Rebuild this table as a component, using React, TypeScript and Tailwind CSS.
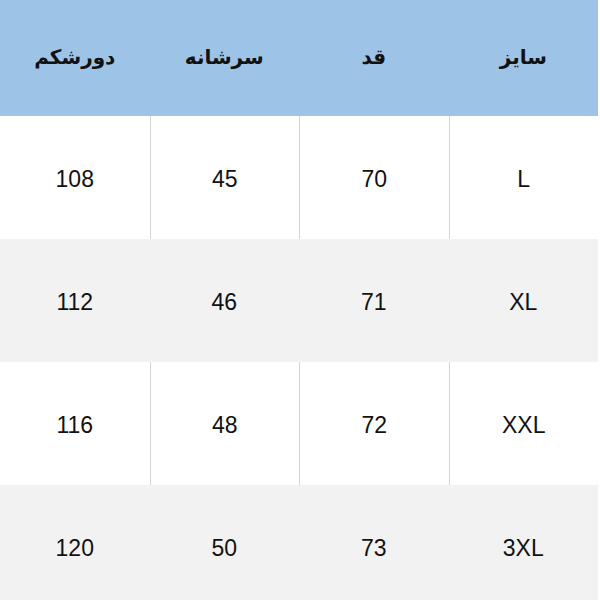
const headers = ["سایز", "قد", "سرشانه", "دورشکم"];

const rows = [
  ["L", "70", "45", "108"],
  ["XL", "71", "46", "112"],
  ["XXL", "72", "48", "116"],
  ["3XL", "73", "50", "120"],
];

const App = () => {
  return (
    <div className="w-[600px] h-[600px] bg-white overflow-hidden">
      <div dir="rtl" className="w-[598px]">
        <div className="grid grid-cols-4 h-[116px] bg-[#9dc3e6]">
          {headers.map((h) => (
            <div
              key={h}
              className="flex items-center justify-center pb-[2px] text-[20px] font-bold text-[#111] font-['DejaVu_Sans',sans-serif]"
            >
              {h}
            </div>
          ))}
        </div>
        {rows.map((row, i) => {
          const gray = i % 2 === 1;
          return (
            <div
              key={row[0]}
              className={
                gray
                  ? "grid grid-cols-4 h-[123px] bg-[#f2f2f2]"
                  : "grid grid-cols-4 h-[123px] bg-white"
              }
            >
              {row.map((cell, j) => (
                <div
                  key={j}
                  className={
                    !gray && j < 3
                      ? "flex items-center justify-center pt-[3px] border-l border-[#d4d4d4] text-[23px] text-[#111] font-['Liberation_Sans',Arial,sans-serif]"
                      : "flex items-center justify-center pt-[3px] text-[23px] text-[#111] font-['Liberation_Sans',Arial,sans-serif]"
                  }
                >
                  {cell}
                </div>
              ))}
            </div>
          );
        })}
      </div>
    </div>
  );
};

export default App;
